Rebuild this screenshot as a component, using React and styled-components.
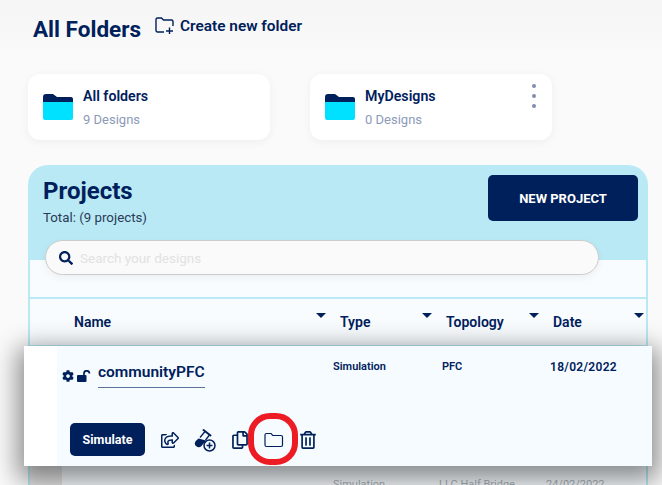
import React from 'react';
import styled, { createGlobalStyle } from 'styled-components';
import { FaCog, FaSearch, FaRegShareSquare, FaRegTrashAlt, FaRegCopy } from 'react-icons/fa';

const navy = '#00205b';

const GlobalStyle = createGlobalStyle`
	html, body {
		margin: 0;
		height: 100%;
		overflow: hidden;
		background: #fafafa;
		font-family: 'Roboto', 'Liberation Sans', sans-serif;
		color: ${navy};
	}
	* { box-sizing: border-box; }
`;

const FolderIcon = () => (
	<svg width="30" height="26" viewBox="0 0 30 26">
		<path d="M0 3a3 3 0 0 1 3-3h7l4 3h14a2 2 0 0 1 2 2v5H0z" fill="#00205b" />
		<path d="M0 8h30v16a2 2 0 0 1-2 2H2a2 2 0 0 1-2-2z" fill="#00e1ff" />
	</svg>
);

const NewFolderIcon = () => (
	<svg width="19" height="18" viewBox="0 0 19 18" fill="none" stroke="#00205b" strokeWidth="1.4">
		<path d="M9 15H2.500A1.500 1.500 0 0 1 1 13.500V2.500A1.500 1.500 0 0 1 2.500 1h4l2 2h8A1.500 1.500 0 0 1 18 4.500V9" />
		<path d="M14.500 10.500v6.500M11 14h7" />
	</svg>
);

const LockIcon = () => (
	<svg width="14" height="12" viewBox="0 0 14 12">
		<path d="M1 5h7.500a1 1 0 0 1 1 1v5a1 1 0 0 1-1 1H1a1 1 0 0 1-1-1V6a1 1 0 0 1 1-1z" fill="#00205b" />
		<path d="M7 5.500V3.500a2.700 2.700 0 0 1 5.400 0" fill="none" stroke="#00205b" strokeWidth="1.700" />
	</svg>
);

const VialIcon = () => (
	<svg width="22" height="24" viewBox="0 0 22 24">
		<path d="M9.500 2l7 5.500" stroke="#00205b" strokeWidth="2" strokeLinecap="round" />
		<path d="M11 3.500L6 9.500M15.500 7l-4 5" stroke="#00205b" strokeWidth="1.300" />
		<path d="M4.500 10.500l7.500 2-4.500 5.500a3.800 3.800 0 0 1-5.800-.3 3.800 3.800 0 0 1 .1-4.700z" fill="#00205b" />
		<circle cx="15.500" cy="17.500" r="5.500" fill="#f5fbff" stroke="#00205b" strokeWidth="1.500" />
		<path d="M15.500 14.500v6M12.500 17.500h6" stroke="#00205b" strokeWidth="1.500" />
	</svg>
);

const OpenFolderIcon = () => (
	<svg width="20" height="16" viewBox="0 0 20 16" fill="none" stroke="#00205b" strokeWidth="1.200">
		<path d="M1 3a1.500 1.500 0 0 1 1.500-1.500h4.500l1.800 2H17a1.500 1.500 0 0 1 1.500 1.500v8a1.500 1.500 0 0 1-1.500 1.500H2.500A1.500 1.500 0 0 1 1 13z" />
	</svg>
);

const App = () => {
	return (
		<Page>
			<GlobalStyle />
			<TopBar>
				<PageTitle>All Folders</PageTitle>
				<CreateFolder><NewFolderIcon />Create new folder</CreateFolder>
			</TopBar>
			<Folders>
				<FolderCard>
					<FolderIcon />
					<div>
						<FolderName>All folders</FolderName>
						<FolderCount>9 Designs</FolderCount>
					</div>
				</FolderCard>
				<FolderCard>
					<FolderIcon />
					<div>
						<FolderName>MyDesigns</FolderName>
						<FolderCount>0 Designs</FolderCount>
					</div>
					<Dots><i /><i /><i /></Dots>
				</FolderCard>
			</Folders>
			<Panel>
				<PanelHead>
					<div>
						<PanelTitle>Projects</PanelTitle>
						<PanelTotal>Total: (9 projects)</PanelTotal>
					</div>
					<NewProject>NEW PROJECT</NewProject>
				</PanelHead>
				<PanelBody>
					<Search>
						<FaSearch size={14} color={navy} />
						<span>Search your designs</span>
					</Search>
					<HeadRow>
						<HeadCell>Name<ArrowShape /></HeadCell>
						<HeadCell>Type<ArrowShape /></HeadCell>
						<HeadCell>Topology<ArrowShape /></HeadCell>
						<HeadCell>Date<ArrowShape /></HeadCell>
					</HeadRow>
					<ActiveRow>
						<ActiveInner>
							<RowTop>
								<NameArea>
									<FaCog size={12} color={navy} />
									<LockIcon />
									<ProjectName>communityPFC</ProjectName>
								</NameArea>
								<Cell $width={109}>Simulation</Cell>
								<Cell $width={108}>PFC</Cell>
								<Cell $date>18/02/2022</Cell>
							</RowTop>
							<Actions>
								<Simulate>Simulate</Simulate>
								<ActionIcons>
									<FaRegShareSquare size={18} color={navy} />
									<VialIcon />
									<FaRegCopy size={18} color={navy} />
									<OpenFolderIcon />
									<FaRegTrashAlt size={18} color={navy} />
								</ActionIcons>
							</Actions>
						</ActiveInner>
						<Marker />
					</ActiveRow>
					<NextRow>
						<span>Simulation</span>
						<span>LLC Half Bridge</span>
						<span>24/02/2022</span>
					</NextRow>
				</PanelBody>
			</Panel>
		</Page>
	);
};

export default App;

const Page = styled.div`
	width: 662px;
	height: 485px;
	overflow: hidden;
	background: linear-gradient(#f5f5f5, #fafafa 60px);
`;
const TopBar = styled.div`
	display: flex;
	align-items: flex-start;
	padding: 15px 0 0 33px;
	height: 74px;
`;
const PageTitle = styled.h1`
	margin: 0;
	font-size: 22.500px;
	line-height: 28px;
	font-weight: 700;
`;
const CreateFolder = styled.div`
	display: flex;
	align-items: center;
	gap: 6px;
	margin-left: 14px;
	font-size: 15.400px;
	font-weight: 600;
	line-height: 22px;
`;
const Folders = styled.div`
	display: flex;
	gap: 40px;
	padding-left: 28px;
`;
const FolderCard = styled.div`
	position: relative;
	display: flex;
	align-items: center;
	gap: 10px;
	width: 242px;
	height: 66px;
	padding-left: 15px;
	background: #fff;
	border-radius: 12px;
	box-shadow: 0 2px 10px rgba(0, 0, 0, 0.05);
`;
const FolderName = styled.div`
	font-size: 14.200px;
	font-weight: 600;
	line-height: 18px;
`;
const FolderCount = styled.div`
	margin-top: 6px;
	font-size: 13px;
	line-height: 17px;
	color: #8c9ab8;
`;
const Dots = styled.div`
	position: absolute;
	top: 10px;
	right: 16px;
	display: flex;
	flex-direction: column;
	gap: 6px;
	i {
		display: block;
		width: 4px;
		height: 4px;
		border-radius: 50%;
		background: #7f8db0;
	}
`;
const Panel = styled.div`
	width: 620px;
	margin: 25px 0 0 28px;
	border-radius: 20px 20px 0 0;
	background: #b8e9f5;
`;
const PanelHead = styled.div`
	display: flex;
	justify-content: space-between;
	align-items: flex-start;
	height: 95px;
	padding: 10px 10px 0 15px;
`;
const PanelTitle = styled.div`
	font-size: 24px;
	font-weight: 700;
	line-height: 32px;
`;
const PanelTotal = styled.div`
	margin-top: 2px;
	font-size: 13.300px;
	line-height: 18px;
	color: #2b3a55;
`;
const NewProject = styled.button`
	width: 150px;
	height: 46px;
	border: 0;
	border-radius: 5px;
	background: ${navy};
	color: #fff;
	font: 700 13px 'Roboto', sans-serif;
`;
const PanelBody = styled.div`
	display: flow-root;
	margin: 0 2px;
	background: #f8fcff;
`;
const Search = styled.div`
	position: relative;
	display: flex;
	align-items: center;
	gap: 7px;
	width: 554px;
	height: 35px;
	margin: -20px 0 22px 15px;
	padding-left: 13px;
	background: #fafafa;
	border: 1px solid #ccc;
	border-radius: 18px;
	box-shadow: 0 3px 8px rgba(0, 0, 0, 0.05);
	font-size: 13.500px;
	color: #e2e2e2;
`;
const HeadRow = styled.div`
	display: grid;
	grid-template-columns: 266px 106px 107px 105px;
	align-items: center;
	height: 49px;
	padding-left: 44px;
	border-top: 2px solid #b8e9f5;
	border-bottom: 1px solid #b8e9f5;
`;
const HeadCell = styled.div`
	display: flex;
	justify-content: space-between;
	padding-right: 14px;
	font-size: 14px;
	font-weight: 600;
`;
const ArrowShape = styled.span`
	margin-top: -1px;
	width: 0;
	height: 0;
	border: 5px solid transparent;
	border-top: 5px solid ${navy};
`;
const ActiveRow = styled.div`
	position: relative;
	z-index: 2;
	width: 628px;
	height: 120px;
	margin-left: -6px;
	padding-left: 33px;
	background: #fff;
	box-shadow: 0 8px 24px 6px rgba(0, 0, 0, 0.45);
`;
const ActiveInner = styled.div`
	height: 100%;
	padding: 14px 0 0 5px;
	background: #f5fbff;
`;
const RowTop = styled.div`
	display: flex;
	align-items: flex-start;
`;
const NameArea = styled.div`
	display: flex;
	align-items: center;
	gap: 3px;
	width: 271px;
	margin-top: 3px;
	> svg:nth-child(2) { margin-right: 4px; }
`;
const ProjectName = styled.span`
	padding-bottom: 6px;
	border-bottom: 1px solid #5c7196;
	font-size: 15.500px;
	font-weight: 600;
`;
const Cell = styled.div`
	width: ${props => props.$width ? `${props.$width}px` : 'auto'};
	font-size: ${props => props.$date ? '12px' : '11px'};
	letter-spacing: ${props => props.$date ? '0.3px' : '0'};
	font-weight: 600;
	line-height: 14px;
`;
const Actions = styled.div`
	display: flex;
	align-items: center;
	gap: 16px;
	margin: 35px 0 0 8px;
`;
const Simulate = styled.button`
	width: 75px;
	height: 33px;
	border: 0;
	border-radius: 5px;
	background: ${navy};
	color: #fff;
	font: 700 12.500px 'Roboto', sans-serif;
`;
const ActionIcons = styled.div`
	display: flex;
	align-items: center;
	gap: 15px;
`;
const Marker = styled.div`
	position: absolute;
	left: 224px;
	top: 67px;
	width: 50px;
	height: 52px;
	border: 6px solid #ed1c24;
	border-radius: 22px;
`;
const NextRow = styled.div`
	display: grid;
	grid-template-columns: 106px 107px 90px;
	height: 30px;
	padding: 12px 0 0 303px;
	background: linear-gradient(90deg, #e6e6e6 32px, transparent 32px);
	font-size: 11px;
	color: #a8b2ba;
`;
